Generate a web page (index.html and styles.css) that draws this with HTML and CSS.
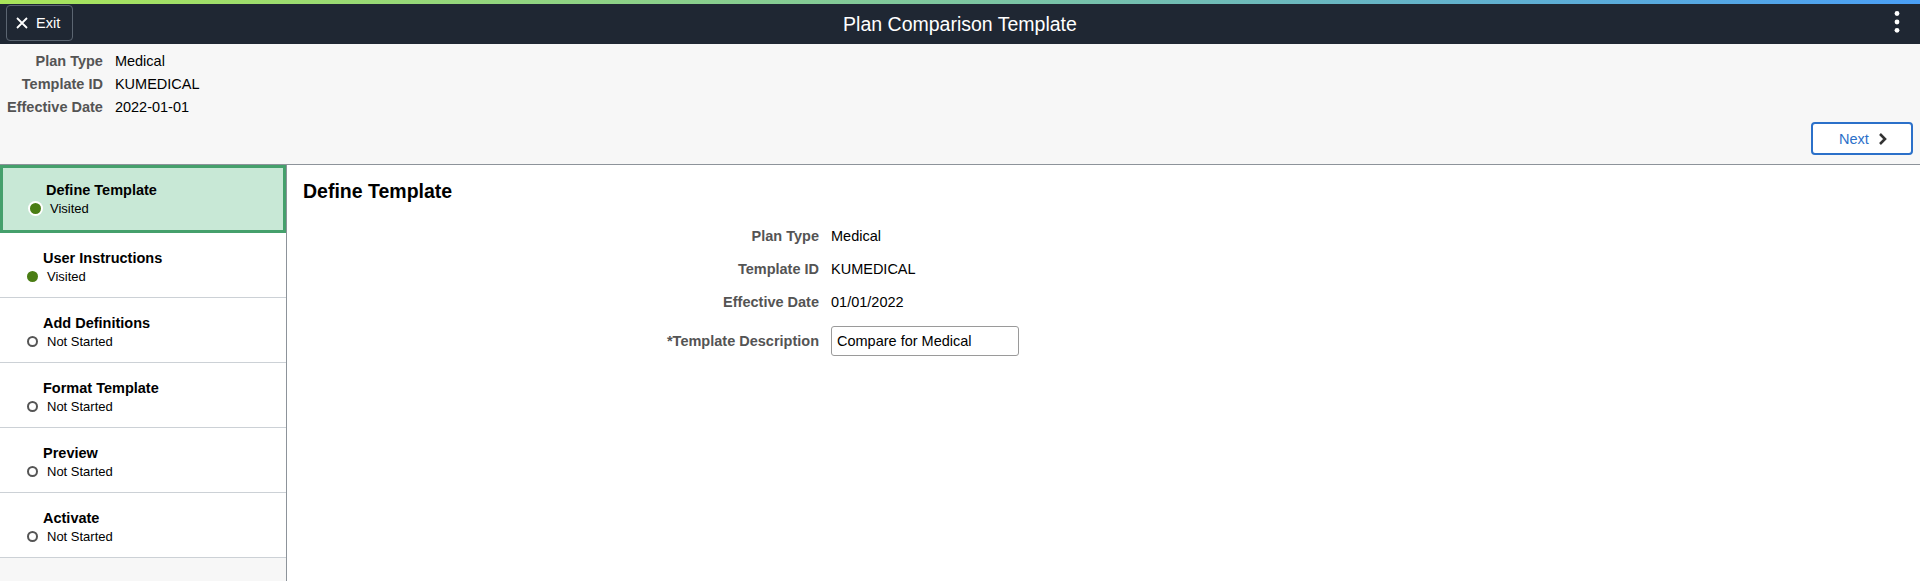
FILE: index.html
```html
<!DOCTYPE html>
<html lang="en">
<head>
  <meta charset="UTF-8" />
  <title>Plan Comparison Template</title>
  <meta name="viewport" content="width=device-width, initial-scale=1.0">
  <link rel="stylesheet" href="styles.css">
</head>
<body>
  <div class="accent"></div>
  <header class="banner">
    <button class="exit-btn" type="button">
      <svg width="12" height="12" viewBox="0 0 12 12"><path d="M1 1 L11 11 M11 1 L1 11" stroke="#fff" stroke-width="1.8" fill="none"/></svg>
      Exit
    </button>
    <h1 class="banner-title">Plan Comparison Template</h1>
    <div class="banner-menu">
      <svg width="8" height="24" viewBox="0 0 8 24"><circle cx="4" cy="3.5" r="2.4" fill="#fff"/><circle cx="4" cy="12" r="2.4" fill="#fff"/><circle cx="4" cy="20.3" r="2.4" fill="#fff"/></svg>
    </div>
  </header>

  <section class="summary">
    <div class="key-info">
      <span class="key-label">Plan Type</span><span class="key-value">Medical</span>
      <span class="key-label">Template ID</span><span class="key-value">KUMEDICAL</span>
      <span class="key-label">Effective Date</span><span class="key-value">2022-01-01</span>
    </div>
    <button class="next-btn" type="button">
      Next
      <svg width="9" height="12" viewBox="0 0 9 12"><path d="M2 1 L7 6 L2 11" stroke="#333" stroke-width="2.6" fill="none"/></svg>
    </button>
  </section>

  <div class="workspace">
    <nav class="steps">
      <div class="step active">
        <div class="step-title">Define Template</div>
        <div class="step-status"><span class="dot done"></span>Visited</div>
      </div>
      <div class="step">
        <div class="step-title">User Instructions</div>
        <div class="step-status"><span class="dot done"></span>Visited</div>
      </div>
      <div class="step">
        <div class="step-title">Add Definitions</div>
        <div class="step-status"><span class="dot"></span>Not Started</div>
      </div>
      <div class="step">
        <div class="step-title">Format Template</div>
        <div class="step-status"><span class="dot"></span>Not Started</div>
      </div>
      <div class="step">
        <div class="step-title">Preview</div>
        <div class="step-status"><span class="dot"></span>Not Started</div>
      </div>
      <div class="step">
        <div class="step-title">Activate</div>
        <div class="step-status"><span class="dot"></span>Not Started</div>
      </div>
    </nav>

    <main class="content">
      <h2>Define Template</h2>
      <div class="form-grid">
        <span class="form-label">Plan Type</span><span class="form-value">Medical</span>
        <span class="form-label">Template ID</span><span class="form-value">KUMEDICAL</span>
        <span class="form-label">Effective Date</span><span class="form-value">01/01/2022</span>
        <label class="form-label input-row" for="descr">*Template Description</label>
        <span class="input-row"><input id="descr" type="text" value="Compare for Medical"></span>
      </div>
    </main>
  </div>
</body>
</html>
```

FILE: styles.css
```css
body {
  margin: 0;
  font-family: "Liberation Sans", Arial, sans-serif;
  font-size: 14.5px;
  color: #000;
  background: #f7f7f7;
  height: 581px;
  overflow: hidden;
  display: flex;
  flex-direction: column;
}

.accent {
  height: 4px;
  background: linear-gradient(90deg, #a9e55a, #7dc6a0 50%, #4a9ff6);
}

.banner {
  height: 40px;
  background: #1f2733;
  display: grid;
  grid-template-columns: 1fr auto 1fr;
  align-items: center;
  padding: 0 6px;
}

.exit-btn {
  justify-self: start;
  width: 67px;
  height: 36px;
  margin-top: -2px;
  border: 1px solid #5b6571;
  border-radius: 4px;
  background: transparent;
  color: #fff;
  font-family: inherit;
  font-size: 14.5px;
  display: flex;
  align-items: center;
  gap: 8px;
  padding: 0 0 0 9px;
}

.banner-title {
  margin: 0;
  color: #fff;
  font-size: 19.5px;
  font-weight: normal;
}

.banner-menu {
  justify-self: end;
  display: flex;
  margin-right: 13px;
  margin-top: -4px;
}

.summary {
  height: 121px;
  box-sizing: border-box;
  border-bottom: 1px solid #8d939a;
  display: flex;
  flex-direction: column;
  justify-content: space-between;
  padding: 6px 7px 9px 7px;
}

.key-info {
  display: grid;
  grid-template-columns: auto auto;
  justify-content: start;
  column-gap: 12px;
  line-height: 23px;
}

.key-label,
.form-label {
  text-align: right;
  font-weight: bold;
  color: #545454;
}

.next-btn {
  align-self: flex-end;
  width: 102px;
  height: 33px;
  border: 2px solid #2b70c9;
  border-radius: 4px;
  background: #fff;
  color: #2b70c9;
  font-family: inherit;
  font-size: 14.5px;
  display: flex;
  align-items: center;
  justify-content: center;
  gap: 9px;
  padding: 0 0 0 2px;
}

.workspace {
  flex: 1;
  display: flex;
}

.steps {
  width: 286px;
  border-right: 1px solid #8d939a;
  background: #f7f7f7;
}

.step {
  height: 65px;
  box-sizing: border-box;
  background: #fff;
  border-bottom: 1px solid #ccd1d6;
  padding: 16px 0 0 27px;
}

.step.active {
  height: 68px;
  background: #c8e8d6;
  border: 3px solid #45a06c;
  padding-top: 13px;
}

.step-title {
  font-weight: bold;
  line-height: 18px;
  margin-left: 16px;
}

.step-status {
  display: flex;
  align-items: center;
  gap: 9px;
  font-size: 13px;
  line-height: 17px;
  margin-top: 1px;
}

.dot {
  width: 11px;
  height: 11px;
  box-sizing: border-box;
  border-radius: 50%;
  border: 2px solid #555;
}

.dot.done {
  border: none;
  background: #4a7d14;
}

.active .dot.done {
  box-shadow: 0 0 0 2px #fff;
}

.content {
  flex: 1;
  background: #fff;
  padding: 14px 16px;
}

.content h2 {
  margin: 0 0 16px;
  font-size: 19.5px;
  line-height: 24px;
}

.form-grid {
  display: grid;
  grid-template-columns: 516px auto;
  grid-auto-rows: 33px;
  column-gap: 12px;
  align-items: center;
  justify-content: start;
}

.form-grid .input-row {
  margin-top: 13px;
}

.form-grid input {
  width: 188px;
  height: 30px;
  box-sizing: border-box;
  border: 1px solid #9a9a9a;
  border-radius: 3px;
  padding: 0 5px;
  font-family: inherit;
  font-size: 14.5px;
  color: #000;
}
```
